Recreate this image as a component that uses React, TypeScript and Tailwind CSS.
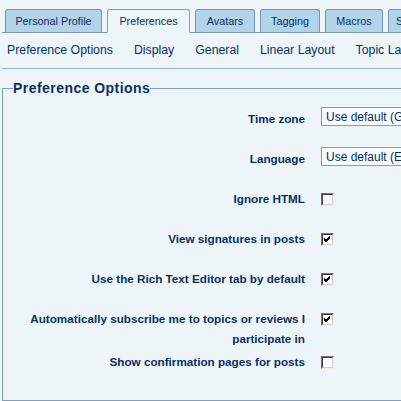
import React from "react";

const tabs = [
  { label: "Personal Profile", w: "w-[97px]" },
  { label: "Preferences", w: "w-[83px]", active: true },
  { label: "Avatars", w: "w-[60px]" },
  { label: "Tagging", w: "w-[60px]" },
  { label: "Macros", w: "w-[58px]" },
  { label: "Signature", w: "w-[62px]" },
];

const subNav = ["Preference Options", "Display", "General", "Linear Layout", "Topic Layout"];

function Checkbox({ checked }: { checked?: boolean }) {
  return (
    <span className="mt-[4px] flex h-[13px] w-[13px] shrink-0 border border-t-[#6d6d6d] border-l-[#6d6d6d] border-b-[#f1efe2] border-r-[#f1efe2] bg-white">
      <span className="flex h-full w-full items-center justify-center border border-t-[#404040] border-l-[#404040] border-b-[#d4d0c8] border-r-[#d4d0c8]">
        {checked && (
          <svg width="9" height="9" viewBox="0 0 9 9">
            <path d="M1 4 L3 6 L7 2 M1 5 L3 7 L7 3 M1 3 L3 5 L7 1" stroke="#000" strokeWidth="1" fill="none" />
          </svg>
        )}
      </span>
    </span>
  );
}

function SelectBox({ value }: { value: string }) {
  return (
    <div className="-mt-[2px] flex h-[19px] w-[200px] shrink-0 items-center border border-[#7a9cc0] bg-[#f7fbfd] pl-[4px] text-[12px] font-normal text-[#0a2f5e] whitespace-nowrap">
      {value}
    </div>
  );
}

function Row({ label, children, className = "" }: { label: string; children: React.ReactNode; className?: string }) {
  return (
    <div className={`flex items-start gap-[16px] ${className}`}>
      <div className="w-[302px] shrink-0 text-right text-[11.7px] font-bold leading-[20px] text-[#0a2f5e]">
        {label}
      </div>
      {children}
    </div>
  );
}

export default function App() {
  return (
    <div
      className="h-[401px] w-[401px] overflow-hidden bg-[#eef5f9] pl-[2px] text-[#0a2f5e]"
      style={{ fontFamily: '"Liberation Sans", Arial, sans-serif' }}
    >
      <div className="w-[700px]">
        <div className="flex h-[33px] items-start gap-[5px] border-b border-[#8595a8] pl-[3px] pt-[9px]">
          {tabs.map((t) => (
            <div
              key={t.label}
              className={`-mb-px flex h-[24px] shrink-0 items-center justify-center rounded-t-[3px] border text-[10.8px] whitespace-nowrap ${t.w} ${
                t.active
                  ? "border-[#7d9fbf] border-b-[#eef5f9] bg-[#eef5f9]"
                  : "border-[#6f94b6] border-b-[#8595a8] bg-[#b3d3e8]"
              }`}
            >
              {t.label}
            </div>
          ))}
        </div>

        <div className="flex h-[36px] items-center gap-[21px] border-b border-[#8eb0cf] pl-[5px] text-[12.3px]">
          {subNav.map((s) => (
            <span key={s} className="whitespace-nowrap">
              {s}
            </span>
          ))}
        </div>

        <fieldset className="mt-[10px] h-[322px] border border-[#7d9fc0] pl-[10px]">
          <legend className="text-[14px] font-bold leading-[18px] tracking-[0.45px] text-[#0a2f5e]">
            Preference Options
          </legend>
          <div className="-ml-[10px] flex flex-col gap-[20px] pt-[12px]">
            <Row label="Time zone">
              <SelectBox value="Use default (GMT)" />
            </Row>
            <Row label="Language">
              <SelectBox value="Use default (English)" />
            </Row>
            <Row label="Ignore HTML">
              <Checkbox />
            </Row>
            <Row label="View signatures in posts">
              <Checkbox checked />
            </Row>
            <Row label="Use the Rich Text Editor tab by default">
              <Checkbox checked />
            </Row>
            <Row label="Automatically subscribe me to topics or reviews I participate in">
              <Checkbox checked />
            </Row>
            <Row label="Show confirmation pages for posts" className="-mt-[17px]">
              <Checkbox />
            </Row>
          </div>
        </fieldset>
      </div>
    </div>
  );
}
